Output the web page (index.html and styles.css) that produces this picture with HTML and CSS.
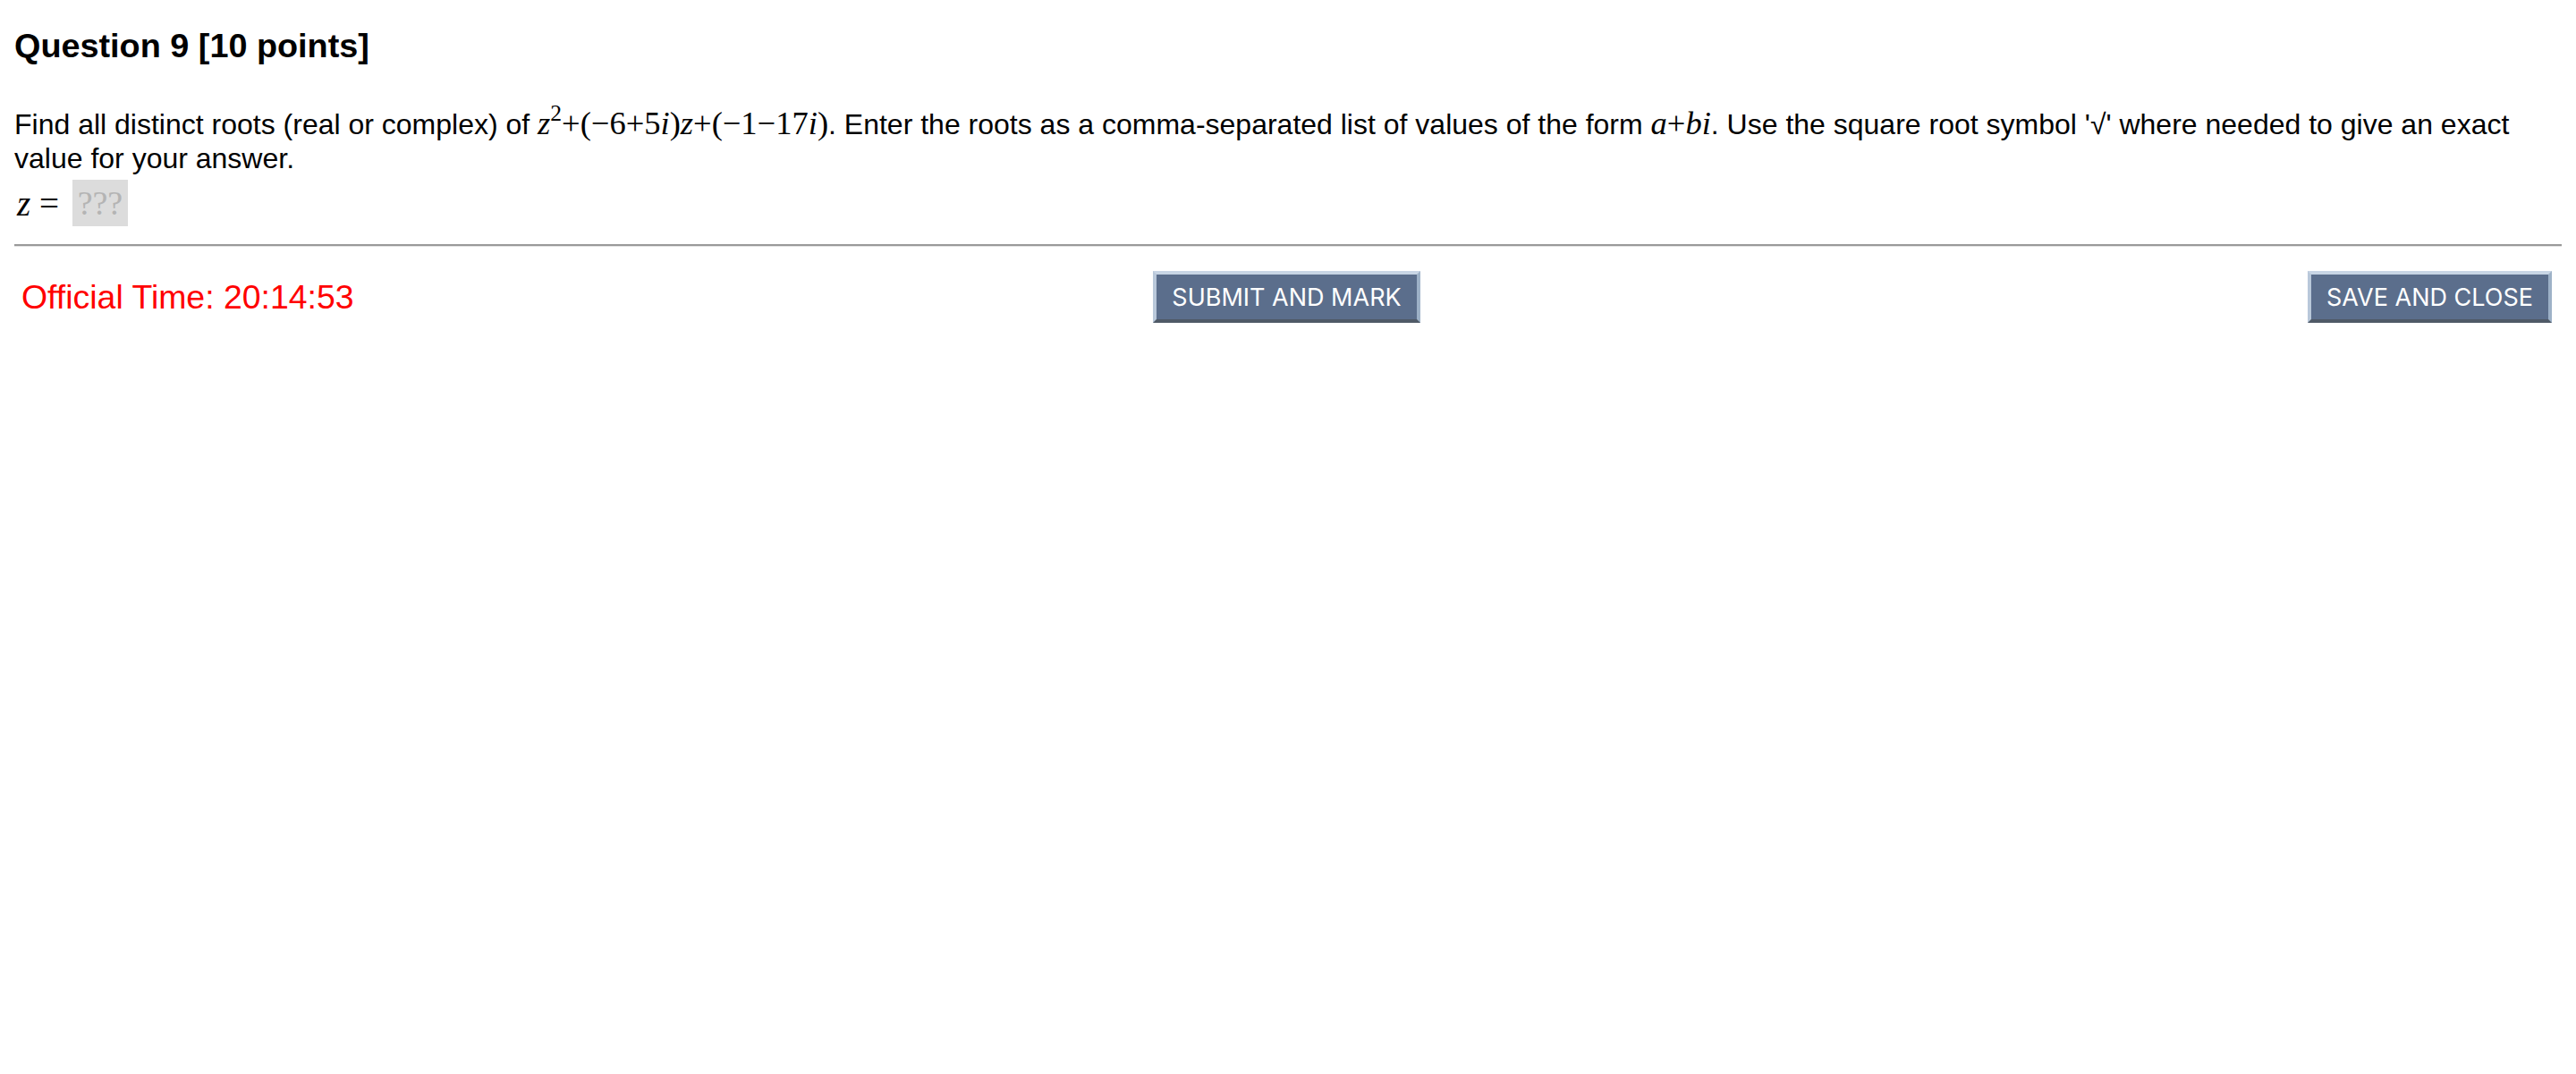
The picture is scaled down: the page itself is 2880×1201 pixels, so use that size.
FILE: index.html
```html
<!DOCTYPE html>
<html lang="en">
<head>
    <meta charset="UTF-8">
    <title>Question 9</title>
    <link rel="stylesheet" href="styles.css">
</head>
<body>
    <h3 class="question-title">Question 9 [10 points]</h3>

    <p class="question-text">
        Find all distinct roots (real or complex) of <span class="math"><i>z</i><sup>2</sup>+(−6+5<i>i</i>)<i>z</i>+(−1−17<i>i</i>)</span>. Enter the roots as a comma-separated list of values of the form <span class="math"><i>a</i>+<i>bi</i></span>. Use the square root symbol '√' where needed to give an exact value for your answer.
    </p>

    <div class="answer-row">
        <span class="answer-label"><i>z</i> =</span>
        <span class="answer-box">???</span>
    </div>

    <hr class="divider">

    <div class="footer">
        <div class="official-time">Official Time: 20:14:53</div>
        <div class="footer-center">
            <button type="button" class="action-btn">SUBMIT AND MARK</button>
        </div>
        <div class="footer-right">
            <button type="button" class="action-btn">SAVE AND CLOSE</button>
        </div>
    </div>
</body>
</html>
```

FILE: styles.css
```css
body {
    margin: 0;
    padding: 0 16px;
    font-family: 'Liberation Sans', Arial, sans-serif;
    font-size: 32px;
    color: #000;
    background: #fff;
}
.question-title {
    margin: 29px 0 0;
    font-size: 37.8px;
    line-height: 44px;
    font-weight: bold;
}
.question-text {
    margin: 46px 0 0;
    line-height: 38px;
}
.math {
    font-family: 'Liberation Serif', 'Times New Roman', serif;
    font-size: 36.5px;
}
.math sup {
    font-size: 0.7em;
    line-height: 0;
    vertical-align: 0.6em;
}
.answer-row {
    display: flex;
    align-items: center;
    margin-top: 5px;
    height: 52px;
}
.answer-label {
    font-family: 'Liberation Serif', 'Times New Roman', serif;
    font-size: 39px;
    margin-left: 3px;
    margin-right: 15px;
}
.answer-box {
    display: inline-block;
    width: 62px;
    height: 52px;
    line-height: 52px;
    text-align: center;
    background: #dcdcdc;
    color: #b4b4b4;
    font-family: 'Liberation Serif', 'Times New Roman', serif;
    font-size: 38px;
}
.divider {
    margin: 20px 0 0;
    height: 0;
    border: none;
    border-top: 2px solid #9a9a9a;
    border-bottom: 1px solid #e4e4e4;
}
.footer {
    display: grid;
    grid-template-columns: 1fr auto 1fr;
    align-items: center;
    margin-top: 27px;
    padding: 0 11px 0 8px;
}
.official-time {
    color: #ff0000;
    font-size: 37.44px;
}
.footer-center {
    text-align: center;
}
.footer-right {
    text-align: right;
}
.action-btn {
    height: 58px;
    padding: 0 17px;
    font-family: Inter, 'Liberation Sans', sans-serif;
    font-size: 27px;
    color: #fff;
    background: #5b6e8c;
    border-style: solid;
    border-width: 4px;
    border-color: #c8d5e5 #9db1c7 #4f5a67 #b9c8da;
    cursor: pointer;
}
```
